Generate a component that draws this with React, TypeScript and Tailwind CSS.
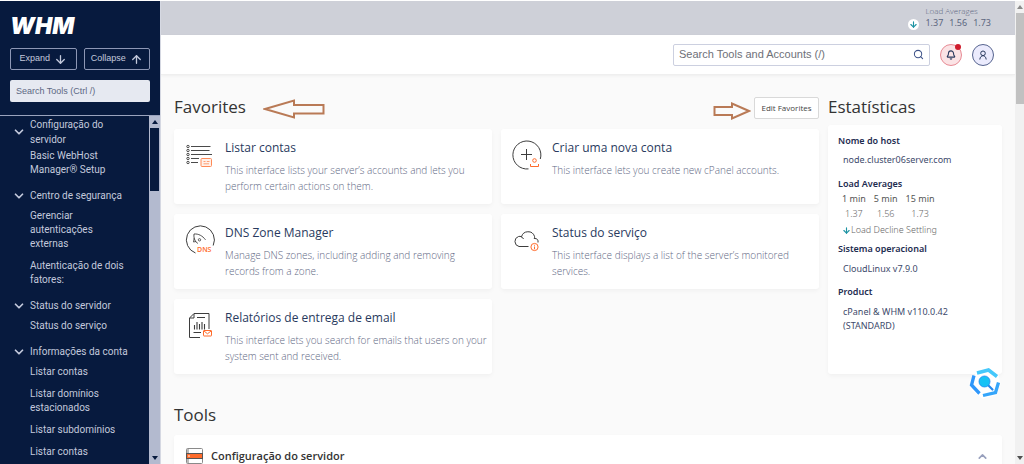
import React from "react";
import { ArrowDown, ArrowUp, Bell, ChevronDown, ChevronUp, Search } from "lucide-react";

type NavGroup = { title: string; items: string[] };

const navGroups: NavGroup[] = [
  { title: "Configuração do servidor", items: ["Basic WebHost Manager® Setup"] },
  {
    title: "Centro de segurança",
    items: ["Gerenciar autenticações externas", "Autenticação de dois fatores:"],
  },
  { title: "Status do servidor", items: ["Status do serviço"] },
  {
    title: "Informações da conta",
    items: ["Listar contas", "Listar domínios estacionados", "Listar subdomínios", "Listar contas"],
  },
];

function ListIcon() {
  return (
    <svg viewBox="0 0 30 30" className="size-[30px]" fill="none" stroke="#4a4a4a" strokeWidth="1">
      {[6.5, 10.5, 14.5, 18.5, 22.5].map((y) => (
        <circle key={y} cx="3" cy={y} r="1.2" />
      ))}
      <path d="M6 6.5H25.500M6 10.5H24.500M6 14.5H27M6 18.5H14M6 22.500H13" strokeWidth="1" />
      <g stroke="#ff8a57">
        <rect x="16" y="18.500" width="10.500" height="8" rx="1" fill="#fff1ea" />
        <path d="M18.500 21.500H20.500M18.500 23.800H24M21.800 21.500H24.500" strokeWidth=".8" />
      </g>
    </svg>
  );
}

function AddAccountIcon() {
  return (
    <svg viewBox="0 0 30 30" className="size-[30px]" fill="none" stroke="#3d3d3d" strokeWidth="1">
      <path d="M16.500 28.900A14 14 0 1 1 28.300 19" />
      <path d="M14.500 9V20M9 14.500H20" />
      <g stroke="#ff6c2c">
        <circle cx="22.500" cy="20.500" r="1.800" />
        <path d="M18.500 24V26.500H26.500V24" />
      </g>
    </svg>
  );
}

function DnsIcon() {
  return (
    <svg viewBox="0 0 30 30" className="size-[30px]" fill="none" stroke="#3d3d3d" strokeWidth="1">
      <path d="M10.500 28A14 14 0 1 1 28.200 20.500" />
      <path d="M9 9C13.500 8.600 17.500 10.800 20.500 14.800M9 9C8.600 12 9.300 14.500 11 17" strokeWidth=".9" />
      <path d="M9.200 13L8.500 17 11 16.500M11 17L13 18.500" strokeWidth=".8" />
      <circle cx="14.500" cy="14.800" r="1.200" strokeWidth=".8" />
      <text x="12" y="27" fontSize="7" fontFamily="Open Sans, sans-serif" fill="#ff6c2c" stroke="none" fontWeight="600">
        DNS
      </text>
    </svg>
  );
}

function CloudIcon() {
  return (
    <svg viewBox="0 0 30 30" className="size-[30px]" fill="none" stroke="#3d3d3d" strokeWidth="1">
      <path d="M16.500 21.500H7A5.200 5.200 0 0 1 6.500 11.500Q8 11 9.500 11.800A6.800 6.800 0 0 1 22.500 11.300Q22.800 13 22.200 14M22.500 13.500C25 13.200 26.500 15 26 17.500" />
      <path d="M9 11.700Q11 12.500 11.500 14" />
      <g stroke="#ff6c2c">
        <circle cx="22.500" cy="22" r="3.600" />
        <path d="M22.500 21.500V24.300M22.500 19.800V20.700" />
      </g>
    </svg>
  );
}

function ReportIcon() {
  return (
    <svg viewBox="0 0 30 30" className="size-[30px]" fill="none" stroke="#3d3d3d" strokeWidth="1">
      <path d="M15 27.500H4.500V8L9 3.500H24V19" />
      <path d="M9 3.800V8H5M12 7.500H20M8.500 22.500H16" />
      <path d="M9.500 15V19.500M12 12V19.500M14.500 14V19.500M17 12V19.500M19.500 14V19.500" strokeWidth="1.100" />
      <g stroke="#ff6c2c">
        <rect x="18.500" y="20.500" width="8" height="5.500" rx=".5" />
        <path d="M19 21L22.500 23.800 26 21" />
      </g>
    </svg>
  );
}

type Favorite = { title: string; text: string; icon: React.ReactNode };

const favorites: Favorite[] = [
  {
    title: "Listar contas",
    text: "This interface lists your server’s accounts and lets you perform certain actions on them.",
    icon: <ListIcon />,
  },
  {
    title: "Criar uma nova conta",
    text: "This interface lets you create new cPanel accounts.",
    icon: <AddAccountIcon />,
  },
  {
    title: "DNS Zone Manager",
    text: "Manage DNS zones, including adding and removing records from a zone.",
    icon: <DnsIcon />,
  },
  {
    title: "Status do serviço",
    text: "This interface displays a list of the server’s monitored services.",
    icon: <CloudIcon />,
  },
  {
    title: "Relatórios de entrega de email",
    text: "This interface lets you search for emails that users on your system sent and received.",
    icon: <ReportIcon />,
  },
];

function Sidebar() {
  return (
    <aside className="flex w-[161px] shrink-0 flex-col border-r border-[#d5d8e2] bg-[#071a3e] font-['Roboto',sans-serif] text-[#c3c9dc]">
      <div className="border-b border-[#9aa3bd] px-2.5 py-[13px]">
        <a href="#home" className="block h-[34px] font-['Inter',sans-serif] text-[23px] leading-6 font-black text-white italic">
          WHM
        </a>
        <div className="flex gap-[7px] font-['Liberation_Sans',sans-serif] text-[9px]">
          <button className="flex h-[22px] flex-1 items-center justify-center gap-1 rounded-[2px] border border-[#8d97b5]">
            Expand <ArrowDown size={13} strokeWidth={2.4} />
          </button>
          <button className="flex h-[22px] flex-1 items-center justify-center gap-1 rounded-[2px] border border-[#8d97b5]">
            Collapse <ArrowUp size={13} strokeWidth={2.4} />
          </button>
        </div>
        <input
          type="text"
          aria-label="Search Tools"
          placeholder="Search Tools (Ctrl /)"
          className="mt-2.5 block h-[22px] w-full rounded-[2px] bg-[#e6e9f1] px-1.5 font-['Liberation_Sans',sans-serif] text-[9px] placeholder:text-[#5d6883]"
        />
      </div>
      <div className="flex min-h-0 flex-1">
        <nav className="min-w-0 flex-1 overflow-hidden pt-px pl-3">
          {navGroups.map((group, i) => (
            <section key={group.title} className="mb-[11px]">
              <button className={`flex w-full items-center gap-1 pr-5 text-left text-[10px] leading-[15px] ${i === 0 ? "mb-0.5" : "mb-1.5"}`}>
                <ChevronDown size={14} strokeWidth={3} className="shrink-0" />
                {group.title}
              </button>
              <ul className="flex flex-col gap-2 pr-5 pl-[18px] text-[10px] leading-[14px]">
                {group.items.map((item, k) => (
                  <li key={k}>
                    <a href="#tool">{item}</a>
                  </li>
                ))}
              </ul>
            </section>
          ))}
        </nav>
        <div className="flex w-[11px] shrink-0 flex-col items-center bg-[#b3bacf] py-1">
          <svg viewBox="0 0 6 4" className="h-1 w-1.5 shrink-0 fill-[#071a3e]"><path d="M0 4L3 0 6 4Z" /></svg>
          <div className="mt-1 h-[63px] w-[9px] bg-[#071a3e]" />
          <svg viewBox="0 0 6 4" className="mt-auto h-1 w-1.5 shrink-0 fill-[#071a3e]"><path d="M0 0L3 4 6 0Z" /></svg>
        </div>
      </div>
    </aside>
  );
}

function TopBar() {
  return (
    <div className="flex h-[34px] shrink-0 justify-end bg-[#ced0d8] pr-6 text-[#5c6680]">
      <div className="flex items-end gap-1.5 pb-[5px]">
        <span className="flex size-[11px] items-center justify-center rounded-full bg-white text-[#1d93a3]">
          <ArrowDown size={9} strokeWidth={3} />
        </span>
        <div>
          <div className="text-[8px] leading-[10px] font-light text-[#5c6680]">Load Averages</div>
          <div className="flex justify-end gap-1.5 font-['Noto_Sans',sans-serif] text-[9px] leading-[14px]">
            <span>1.37</span>
            <span>1.56</span>
            <span>1.73</span>
          </div>
        </div>
      </div>
    </div>
  );
}

function Header() {
  return (
    <header className="flex h-10 shrink-0 items-center justify-end gap-2.5 border-b border-[#efefef] bg-white pr-[21px] shadow-[0_1px_3px_rgba(0,0,0,0.05)]">
      <label className="flex h-[22px] w-[257px] items-center rounded-[2px] border border-[#ccd0e0] px-[5px]">
        <input
          type="text"
          aria-label="Search Tools and Accounts"
          placeholder="Search Tools and Accounts (/)"
          className="min-w-0 flex-1 font-['Liberation_Sans',sans-serif] text-[11px] outline-none placeholder:text-[#6e7078]"
        />
        <Search size={11} strokeWidth={2.2} className="text-[#3d5288]" />
      </label>
      <button aria-label="Notifications" className="relative flex size-[22px] items-center justify-center rounded-full border border-[#e78a94] bg-[#fbe3e5] text-[#293a5e]">
        <Bell size={10} strokeWidth={2.6} />
        <span className="absolute -top-px right-0 size-1.5 rounded-full bg-[#cf1b2b]" />
      </button>
      <button aria-label="User" className="flex size-[22px] items-center justify-center rounded-full border border-[#56648f] bg-[#ebebfd] text-[#293a5e]">
        <svg viewBox="0 0 10 10" className="size-2.5" fill="none" stroke="currentColor">
          <circle cx="5" cy="3.300" r="2.300" />
          <path d="M1.800 9.500C2 7 3.500 5.800 5 5.700S8 7 8.200 9.500" />
        </svg>
      </button>
    </header>
  );
}

function FavoriteCard({ title, text, icon }: Favorite) {
  return (
    <a href="#favorite" className="flex gap-2.5 rounded-[3px] bg-white pt-[11px] pr-1 pb-2.5 pl-[11px] shadow-[0_2px_4px_rgba(0,0,0,0.04)]">
      <div className="shrink-0">{icon}</div>
      <div className="min-w-0">
        <h3 className="text-[12px] leading-4 text-[#293a5e]">{title}</h3>
        <p className="mt-1.5 text-[10px] leading-4 font-light text-[#5f6985]">{text}</p>
      </div>
    </a>
  );
}

function Stats() {
  return (
    <section className="flex w-[174px] shrink-0 flex-col">
      <h2 className="mb-1.5 text-[17px] leading-6 text-[#333]">Estatísticas</h2>
      <dl className="flex-1 rounded-[3px] bg-white px-2.5 pt-[9px] font-['Noto_Sans',sans-serif] text-[9px] leading-[14px] text-[#3d4a6b] shadow-[0_2px_4px_rgba(0,0,0,0.04)]">
        <dt className="font-semibold text-[#1d2c50]">Nome do host</dt>
        <dd className="mt-[5px] mb-2.5 pl-[5px]">node.cluster06server.com</dd>
        <dt className="font-semibold text-[#1d2c50]">Load Averages</dt>
        <dd className="mb-[5px]">
          <table className="text-center">
            <thead>
              <tr className="leading-[15px] text-[#555]">
                <th className="px-1 font-normal">1 min</th>
                <th className="px-1 font-normal">5 min</th>
                <th className="px-1 font-normal">15 min</th>
              </tr>
            </thead>
            <tbody>
              <tr className="leading-[15px] font-light text-[#666]">
                <td>1.37</td>
                <td>1.56</td>
                <td>1.73</td>
              </tr>
            </tbody>
          </table>
          <div className="mt-0.5 flex items-center pl-1 font-light text-[#666]">
            <ArrowDown size={9} strokeWidth={3} className="text-[#1d93a3]" />
            Load Decline Settling
          </div>
        </dd>
        <dt className="font-semibold text-[#1d2c50]">Sistema operacional</dt>
        <dd className="mt-1.5 mb-[9px] pl-[5px]">CloudLinux v7.9.0</dd>
        <dt className="font-semibold text-[#1d2c50]">Product</dt>
        <dd className="mt-1.5 pl-[5px]">cPanel &amp; WHM v110.0.42 (STANDARD)</dd>
      </dl>
    </section>
  );
}

function FloatingBadge() {
  return (
    <button aria-label="Inspect" className="absolute right-[23px] bottom-[65px] size-8">
      <svg viewBox="0 0 32 32" className="size-8" fill="none">
        <path d="M11 3.500L18 2 28 8 30 17 26 27 14 30 3 22 2 15Z" fill="#fff" stroke="#fff" strokeWidth="3" />
        <path d="M8 6L19.500 3 28 9.500" stroke="#45c8fb" strokeWidth="3.500" />
        <path d="M29.500 15.500L26.500 25.500 14 28.500" stroke="#35a5fa" strokeWidth="3.300" />
        <path d="M5 8.500L2.500 18 10.500 26.500" stroke="#2f97fa" strokeWidth="3.300" />
        <path d="M19 18L23.500 22.500" stroke="#2388ee" strokeWidth="2.200" strokeLinecap="round" />
        <circle cx="15.500" cy="14.500" r="5.500" fill="#16c2f5" stroke="#2388ee" strokeWidth=".8" />
      </svg>
    </button>
  );
}

function PageScrollbar() {
  return (
    <div className="flex w-[9px] shrink-0 flex-col items-center bg-[#f1f1f1] py-1">
      <svg viewBox="0 0 6 4" className="h-1 w-1.5 shrink-0 fill-[#8a8a8a]"><path d="M0 4L3 0 6 4Z" /></svg>
      <div className="mt-1 h-[91px] w-2 bg-[#c1c1c1]" />
      <svg viewBox="0 0 6 4" className="mt-auto h-1 w-1.5 shrink-0 fill-[#505050]"><path d="M0 0L3 4 6 0Z" /></svg>
    </div>
  );
}

export default function App() {
  return (
    <div className="relative flex h-screen overflow-hidden border-t border-white bg-[#fafafa] font-['Open_Sans',sans-serif]">
      <Sidebar />
      <div className="flex min-w-0 flex-1 flex-col overflow-hidden">
        <TopBar />
        <Header />
        <main className="px-[13px] pt-5">
          <div className="flex gap-[9px]">
            <section className="min-w-0 flex-1">
              <div className="mb-1.5 flex h-7 items-start">
                <h2 className="text-[17px] leading-6 text-[#333]">Favorites</h2>
                <svg viewBox="0 0 62 20" className="mt-1 ml-[17px] h-5 w-[62px]" fill="none" stroke="#b97a56" strokeWidth="2">
                  <path d="M2 10L31 1.500V6H60.500V14.500H31V18.500Z" />
                </svg>
                <svg viewBox="0 0 38 18" className="mt-[7px] mr-[3px] ml-auto h-[18px] w-[38px]" fill="none" stroke="#b97a56" strokeWidth="2">
                  <path d="M36 9L19 1.500V5H1.500V13H19V16.500Z" />
                </svg>
                <button className="mt-0.5 h-[22px] w-[65px] rounded-[2px] border border-[#d9d9d9] bg-white text-[8px] text-[#444]">
                  Edit Favorites
                </button>
              </div>
              <div className="grid grid-cols-2 gap-x-[9px] gap-y-2.5">
                {favorites.map((f) => (
                  <FavoriteCard key={f.title} {...f} />
                ))}
              </div>
            </section>
            <Stats />
          </div>
          <h2 className="mt-[29px] mb-2 text-[17px] leading-6 text-[#333]">Tools</h2>
          <section className="rounded-[3px] bg-white shadow-[0_2px_4px_rgba(0,0,0,0.04)]">
            <button className="flex h-[42px] w-full items-center gap-2 px-3 text-left text-[11px] font-semibold text-[#333]">
              <svg viewBox="0 0 17 16" className="h-4 w-[17px]">
                <rect x=".5" y=".5" width="16" height="15" rx="1" fill="#fff" stroke="#8a8a8a" />
                <rect x="1" y="1" width="2" height="14" fill="#bbb" />
                <rect x="0" y="5" width="17" height="6" fill="#555" />
                <rect x="1" y="6" width="15" height="4" fill="#ff6c2c" />
                <rect x="2" y="7" width="2" height="2" fill="#ffb08c" />
              </svg>
              Configuração do servidor
              <ChevronUp size={13} strokeWidth={3} className="mr-px ml-auto text-[#98a0bd]" />
            </button>
          </section>
        </main>
      </div>
      <PageScrollbar />
      <FloatingBadge />
    </div>
  );
}
